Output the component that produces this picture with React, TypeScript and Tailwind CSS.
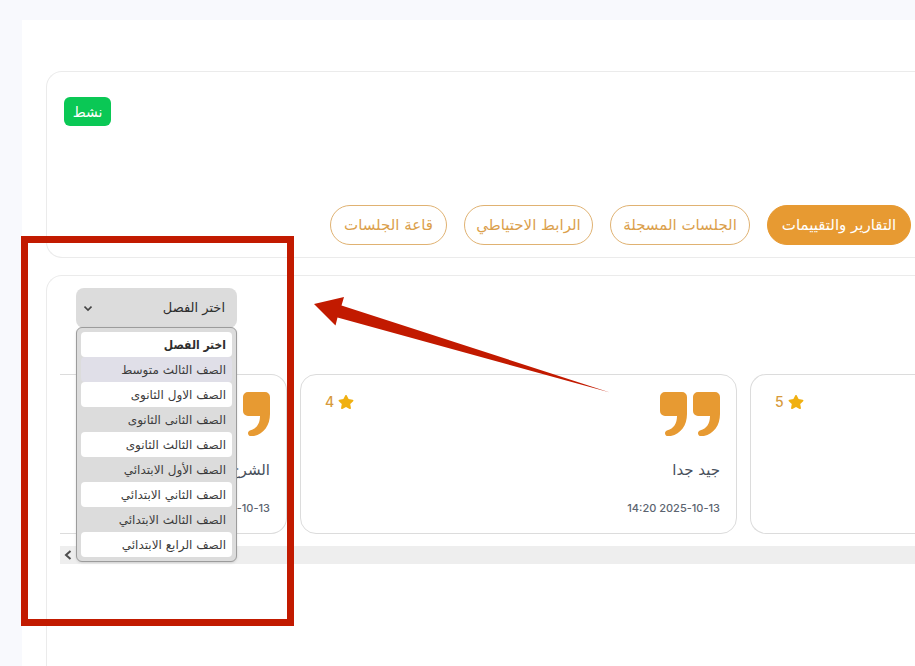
import { useState } from 'react'
import { clsx } from 'clsx'
import { FaStar } from 'react-icons/fa'

const TABS = [
  { id: 'reports', label: 'التقارير والتقييمات', width: 'w-36' },
  { id: 'recorded', label: 'الجلسات المسجلة', width: 'w-[140px]' },
  { id: 'backup', label: 'الرابط الاحتياطي', width: 'w-[129px]' },
  { id: 'room', label: 'قاعة الجلسات', width: 'w-[117px]' },
]

const GRADES = [
  'اختر الفصل',
  'الصف الثالث متوسط',
  'الصف الاول الثانوى',
  'الصف الثانى الثانوى',
  'الصف الثالث الثانوى',
  'الصف الأول الابتدائي',
  'الصف الثاني الابتدائي',
  'الصف الثالث الابتدائي',
  'الصف الرابع الابتدائي',
]

function QuoteMark() {
  return (
    <svg width="60" height="44" viewBox="0 0 60 44" fill="#e79a32" aria-hidden="true">
      <path d="M5 0H22a5 5 0 0 1 5 5V22C27 34 20 43 9 44.300C6.500 44.600 5 43 5 41.300C5 39.800 5.800 38.800 7.500 38.300C13.500 36.500 17 32 17 24H5a5 5 0 0 1-5-5V5a5 5 0 0 1 5-5Z" />
      <path d="M38 0H55a5 5 0 0 1 5 5V22C60 34 53 43 42 44.300C39.500 44.600 38 43 38 41.300C38 39.800 38.800 38.800 40.500 38.300C46.500 36.500 50 32 50 24H38a5 5 0 0 1-5-5V5a5 5 0 0 1 5-5Z" />
    </svg>
  )
}

type ReviewProps = {
  rating?: number
  comment?: string
  date?: string
  className: string
}

function ReviewCard({ rating, comment, date, className }: ReviewProps) {
  return (
    <article className={clsx('h-40 overflow-hidden border-y border-[#dcdcdc] bg-white px-4 pt-[17px]', className)}>
      <div className="flex h-12 items-start justify-between pl-2">
        {rating ? (
          <span className="flex items-center gap-1 font-[Inter] text-sm font-medium text-[#d79a3c]">
            {rating}
            <FaStar className="size-4 text-[#f0b012]" />
          </span>
        ) : (
          <span />
        )}
        {comment && <QuoteMark />}
      </div>
      {comment && (
        <p dir="rtl" className="mt-4 text-[15px] leading-7 whitespace-nowrap text-[#48505c]">
          {comment}
        </p>
      )}
      {date && (
        <p className="mt-4 text-right font-[Inter] text-[11px] leading-4 font-medium text-[#5c6470]">{date}</p>
      )}
    </article>
  )
}

function GradeSelect() {
  const [grade, setGrade] = useState(GRADES[0])

  return (
    <div className="relative z-10 w-[161px]">
      <select
        aria-label="اختر الفصل"
        dir="rtl"
        value={grade}
        onChange={(e) => setGrade(e.target.value)}
        className="block h-10 w-full appearance-none rounded-lg bg-[#dcdcdc] pr-3 pl-8 text-[13px] text-[#2e2e2e]"
      >
        {GRADES.map((g) => (
          <option key={g}>{g}</option>
        ))}
      </select>
      <svg
        className="pointer-events-none absolute top-4 left-2 size-2"
        viewBox="0 0 8 8"
        fill="none"
        stroke="#444"
        strokeWidth="1.600"
        aria-hidden="true"
      >
        <path d="M0.500 2.500l3.500 3.500 3.500-3.500" />
      </svg>
      <ul
        role="listbox"
        aria-label="الفصول"
        dir="rtl"
        className="absolute top-[39px] left-0 w-full rounded-md border border-[#9c9c9c] bg-[#dcdcdc] p-1 shadow-sm"
      >
        {GRADES.map((g, i) => (
          <li key={g} role="option" aria-selected={g === grade}>
            <button
              type="button"
              onClick={() => setGrade(g)}
              className={clsx(
                'block h-[25px] w-full rounded-sm px-1.5 text-right text-xs whitespace-nowrap',
                i % 2 === 0 && 'bg-white',
                i === 1 && 'bg-[#e0dfe8]',
                i === 0
                  ? "font-['DejaVu_Sans_Condensed','DejaVu_Sans',sans-serif] font-bold text-[#2e2e2e]"
                  : 'text-[#3c3c3c]',
              )}
            >
              {g}
            </button>
          </li>
        ))}
      </ul>
    </div>
  )
}

function Annotation() {
  return (
    <>
      <div className="pointer-events-none absolute top-[236px] left-[21px] z-20 h-[390px] w-[273px] border-7 border-[#c21a00]" />
      <svg
        className="pointer-events-none absolute top-[296px] left-[313px] z-20"
        width="300"
        height="98"
        viewBox="313 296 300 98"
        aria-hidden="true"
      >
        <path d="M314 304L344 297L341.500 305.500L610 392.500L337.500 317.500L335.500 325.500Z" fill="#c21a00" />
      </svg>
    </>
  )
}

export default function App() {
  const [tab, setTab] = useState('reports')

  return (
    <div className="relative min-h-screen overflow-hidden bg-[#f8f9fd] pt-5 pl-[22px] font-['DejaVu_Sans',sans-serif]">
      <main className="flex min-h-screen flex-col bg-white pt-[51px] pl-6">
        <section className="rounded-l-2xl border-y border-l border-[#ebebeb] pt-[25px] pr-1 pb-3 pl-[17px]">
          <div className="flex h-[29px] w-[47px] items-center justify-center rounded-md bg-[#0ac855] text-sm text-white">
            نشط
          </div>
          <nav dir="rtl" className="mt-[79px] flex gap-[17px]">
            {TABS.map((t) => (
              <button
                key={t.id}
                type="button"
                onClick={() => setTab(t.id)}
                className={clsx(
                  'h-10 shrink-0 rounded-full border text-[15px] whitespace-nowrap',
                  t.width,
                  tab === t.id ? 'border-[#e79a32] bg-[#e79a32] text-white' : 'border-[#e0b272] text-[#dba04c]',
                )}
              >
                {t.label}
              </button>
            ))}
          </nav>
        </section>

        <section className="mt-[17px] grow rounded-tl-2xl border-t border-l border-[#ebebeb] pt-3 pl-[13px]">
          <div className="pl-4">
            <GradeSelect />
          </div>
          <div className="mt-[46px] grid grid-cols-[227px_437fr_165fr] gap-[13px]">
            <ReviewCard comment="الشرح" date="14:20 2025-10-13" className="rounded-r-2xl border-r" />
            <ReviewCard rating={4} comment="جيد جدا" date="14:20 2025-10-13" className="rounded-2xl border-x" />
            <ReviewCard rating={5} className="rounded-l-2xl border-l" />
          </div>
          <div className="mt-3 flex h-[18px] items-center bg-[#eeeeee] pl-1">
            <svg width="8" height="10" viewBox="0 0 8 10" fill="none" stroke="#4c4c4c" strokeWidth="2" aria-hidden="true">
              <path d="M6.500 1L2 5l4.500 4" />
            </svg>
          </div>
        </section>
      </main>
      <Annotation />
    </div>
  )
}
